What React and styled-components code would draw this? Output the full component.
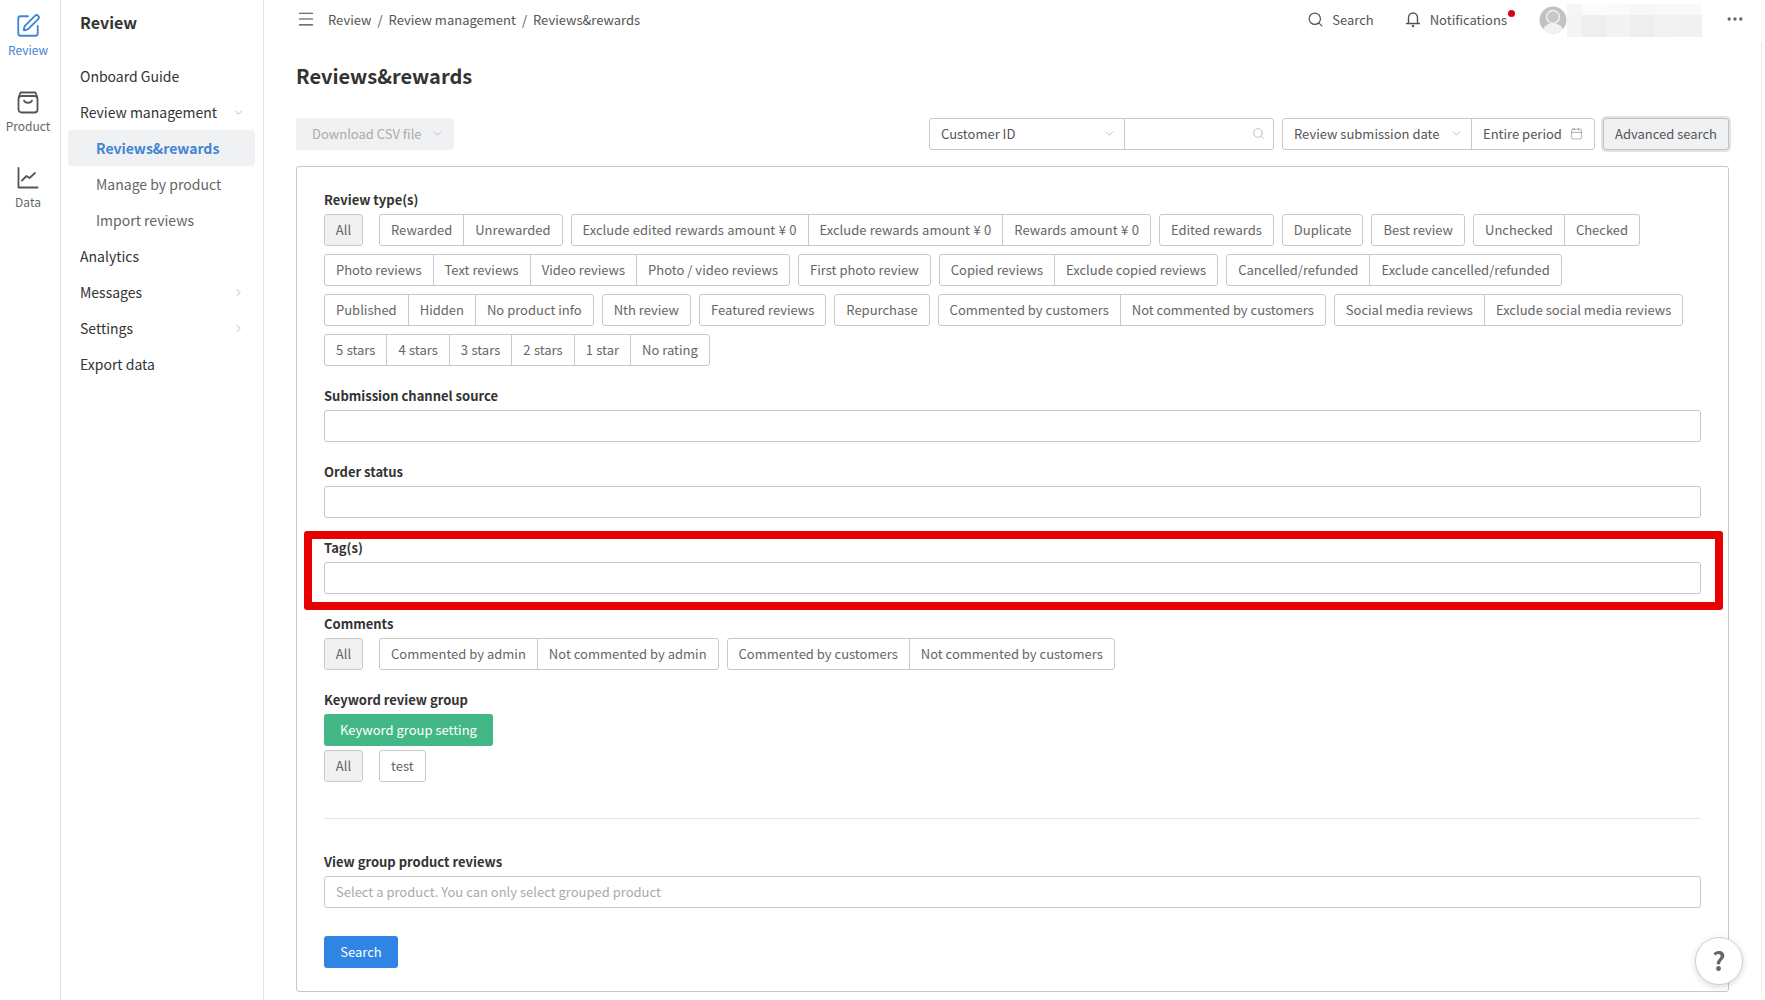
import styled, { createGlobalStyle } from "styled-components"
import { Calendar, ChevronDown, ChevronRight, Ellipsis, Menu, Search, SquarePen } from "lucide-react"

const typeGroups = [
  ["Rewarded", "Unrewarded"],
  ["Exclude edited rewards amount ¥ 0", "Exclude rewards amount ¥ 0", "Rewards amount ¥ 0"],
  ["Edited rewards"],
  ["Duplicate"],
  ["Best review"],
  ["Unchecked", "Checked"],
  ["Photo reviews", "Text reviews", "Video reviews", "Photo / video reviews"],
  ["First photo review"],
  ["Copied reviews", "Exclude copied reviews"],
  ["Cancelled/refunded", "Exclude cancelled/refunded"],
  ["Published", "Hidden", "No product info"],
  ["Nth review"],
  ["Featured reviews"],
  ["Repurchase"],
  ["Commented by customers", "Not commented by customers"],
  ["Social media reviews", "Exclude social media reviews"],
  ["5 stars", "4 stars", "3 stars", "2 stars", "1 star", "No rating"],
]

const commentGroups = [
  ["Commented by admin", "Not commented by admin"],
  ["Commented by customers", "Not commented by customers"],
]

// pale mosaic that hides the user name
const mosaicShades = [
  "#f6f6f6", "#fbfbfb", "#fafafa", "#f7f7f7", "#f8f8f8", "#f9f9f9",
  "#f4f4f4", "#eeeeee", "#f3f3f3", "#eeeeee", "#f2f2f2", "#f1f1f1",
]

const ChipGroups = ({ groups }) => (
  <ChipWrap>
    <AllChip>All</AllChip>
    {groups.map((group) => (
      <ChipGroup key={group[0]}>
        {group.map((label) => (
          <Chip key={label} $spaced={/\d/.test(label)}>{label}</Chip>
        ))}
      </ChipGroup>
    ))}
  </ChipWrap>
)

const BagIcon = () => (
  <svg width="26" height="26" viewBox="0 0 26 26" fill="none" stroke="#555" strokeWidth="1.8" strokeLinecap="round" strokeLinejoin="round">
    <rect x="3.5" y="7" width="19" height="16.5" rx="3" />
    <path d="M3.8 8 L5.5 3.5 H20.5 L22.2 8" />
    <path d="M9 11.5 C10 14.5 16 14.5 17 11.5" />
  </svg>
)

const ChartIcon = () => (
  <svg width="26" height="26" viewBox="0 0 26 26" fill="none" stroke="#555" strokeWidth="1.8" strokeLinecap="round" strokeLinejoin="round">
    <path d="M3.5 3 V22.5 H22.5" />
    <path d="M7 15.5 L11.5 11 L14.5 13 L20 8" />
  </svg>
)

const BellIcon = () => (
  <svg width="18" height="18" viewBox="0 0 18 18" fill="none" stroke="#555" strokeWidth="1.4" strokeLinecap="round">
    <path d="M2.5 13.5 H15.5" />
    <path d="M4.5 13.5 V7.5 a4.5 4.5 0 0 1 9 0 V13.5" />
    <circle cx="9" cy="16" r="0.6" fill="#555" />
  </svg>
)

const AvatarIcon = () => (
  <svg width="28" height="28" viewBox="0 0 28 28">
    <circle cx="14" cy="14" r="13.5" fill="#c2c2c2" />
    <path d="M4 23.5 C6 18.5 10 17.5 14 17.5 C18 17.5 22 18.5 24 23.5 C19 28.5 9 28.5 4 23.5 Z" fill="#f2f2f2" />
    <circle cx="14" cy="11" r="6.5" fill="#c8c8c8" stroke="#f2f2f2" strokeWidth="1.4" />
  </svg>
)

const App = () => {
  return (
    <Page>
      <GlobalStyle />
      <Rail>
        <RailItem $active>
          <SquarePen size={26} strokeWidth={1.7} />
          <span>Review</span>
        </RailItem>
        <RailItem>
          <BagIcon />
          <span>Product</span>
        </RailItem>
        <RailItem>
          <ChartIcon />
          <span>Data</span>
        </RailItem>
      </Rail>

      <Sidebar>
        <SideTitle>Review</SideTitle>
        <SideItem>Onboard Guide</SideItem>
        <SideItem>
          Review management
          <ChevronDown size={13} strokeWidth={1.2} color="#999" />
        </SideItem>
        <SideSub $active>Reviews&amp;rewards</SideSub>
        <SideSub>Manage by product</SideSub>
        <SideSub>Import reviews</SideSub>
        <SideItem>Analytics</SideItem>
        <SideItem>
          Messages
          <ChevronRight size={13} strokeWidth={1.2} color="#999" />
        </SideItem>
        <SideItem>
          Settings
          <ChevronRight size={13} strokeWidth={1.2} color="#999" />
        </SideItem>
        <SideItem>Export data</SideItem>
      </Sidebar>

      <Main>
        <TopBar>
          <Menu size={20} strokeWidth={1.3} color="#444" />
          <Crumbs>
            <span>Review</span>
            <i>/</i>
            <span>Review management</span>
            <i>/</i>
            <span>Reviews&amp;rewards</span>
          </Crumbs>
          <TopRight>
            <TopAction $gap={30}>
              <Search size={17} strokeWidth={1.7} />
              Search
            </TopAction>
            <TopAction $gap={32}>
              <BellIcon />
              Notifications
              <RedDot />
            </TopAction>
            <UserBox>
              <AvatarIcon />
              <Mosaic>
                {mosaicShades.map((shade, i) => (
                  <MosaicCell key={i} $shade={shade} />
                ))}
              </Mosaic>
            </UserBox>
            <Ellipsis size={20} strokeWidth={2} color="#666" />
          </TopRight>
        </TopBar>

        <Content>
          <PageTitle>Reviews&amp;rewards</PageTitle>
          <Toolbar>
            <DisabledButton>
              Download CSV file
              <ChevronDown size={13} strokeWidth={1.3} />
            </DisabledButton>
            <ToolRight>
              <ControlGroup>
                <SelectCell $width={194}>
                  Customer ID
                  <ChevronDown size={13} strokeWidth={1.2} color="#999" />
                </SelectCell>
                <SelectCell $width={149}>
                  <span />
                  <Search size={13} strokeWidth={1.3} color="#aaa" />
                </SelectCell>
              </ControlGroup>
              <ControlGroup>
                <SelectCell $width={188}>
                  Review submission date
                  <ChevronDown size={13} strokeWidth={1.2} color="#999" />
                </SelectCell>
                <SelectCell $width={123}>
                  Entire period
                  <CalendarIcon size={13} strokeWidth={1.2} color="#888" />
                </SelectCell>
              </ControlGroup>
              <AdvancedButton>Advanced search</AdvancedButton>
            </ToolRight>
          </Toolbar>

          <Card>
            <Field>
              <FieldLabel>Review type(s)</FieldLabel>
              <ChipGroups groups={typeGroups} />
            </Field>
            <Field>
              <FieldLabel>Submission channel source</FieldLabel>
              <TextBox />
            </Field>
            <Field>
              <FieldLabel>Order status</FieldLabel>
              <TextBox />
            </Field>
            <Field>
              <Highlight />
              <FieldLabel>Tag(s)</FieldLabel>
              <TextBox />
            </Field>
            <Field>
              <FieldLabel>Comments</FieldLabel>
              <ChipGroups groups={commentGroups} />
            </Field>
            <KeywordField>
              <FieldLabel>Keyword review group</FieldLabel>
              <GreenButton>Keyword group setting</GreenButton>
              <ChipGroups groups={[["test"]]} />
            </KeywordField>
            <Divider />
            <Field>
              <FieldLabel>View group product reviews</FieldLabel>
              <TextBox>Select a product. You can only select grouped product</TextBox>
            </Field>
            <SearchButton>Search</SearchButton>
          </Card>
        </Content>
      </Main>

      <HelpButton>?</HelpButton>
    </Page>
  )
}

const GlobalStyle = createGlobalStyle`
    * {
        box-sizing: border-box;
    }

    body {
        margin: 0;
        background: #fff;
        color: #333;
        font-family: "Noto Sans CJK JP", "Noto Sans", sans-serif;
        font-size: 13px;
    }
`

const Page = styled.div`
    display: flex;
    height: 100vh;
    overflow: hidden;
`

const Rail = styled.nav`
    flex: none;
    width: 61px;
    padding: 13px 4px 0 0;
    border-right: 1px solid #e2e2e2;
`

const RailItem = styled.div`
    display: flex;
    flex-direction: column;
    align-items: center;
    gap: 3px;
    height: 76px;
    font-size: 12px;
    line-height: 16px;
    color: ${(props) => (props.$active ? "#3f85d3" : "#666")};
`

const Sidebar = styled.aside`
    flex: none;
    width: 203px;
    padding: 0 8px 0 7px;
    border-right: 1px solid #e2e2e2;
    font-size: 14px;
`

const SideTitle = styled.div`
    height: 58px;
    padding: 10px 0 0 12px;
    font-size: 16px;
    line-height: 24px;
    font-weight: 700;
`

const SideItem = styled.div`
    display: flex;
    align-items: center;
    justify-content: space-between;
    height: 36px;
    padding: 0 10px 0 12px;
    color: #333;
`

const SideSub = styled.div`
    display: flex;
    align-items: center;
    height: 36px;
    padding-left: 28px;
    border-radius: 4px;
    color: ${(props) => (props.$active ? "#3f85d3" : "#666")};
    background: ${(props) => (props.$active ? "#f0f1f3" : "transparent")};
    font-weight: ${(props) => (props.$active ? 700 : 400)};
`

const Main = styled.main`
    flex: 1;
    min-width: 0;
`

const TopBar = styled.header`
    display: flex;
    align-items: center;
    height: 38px;
    padding: 0 20px 0 32px;
`

const Crumbs = styled.div`
    display: flex;
    gap: 6px;
    margin-left: 12px;
    color: #555;

    i {
        font-style: normal;
    }
`

const TopRight = styled.div`
    display: flex;
    align-items: center;
    margin-left: auto;
`

const TopAction = styled.div`
    position: relative;
    display: flex;
    align-items: center;
    gap: 8px;
    margin-right: ${(props) => props.$gap}px;
    color: #555;
`

const RedDot = styled.span`
    position: absolute;
    top: 0;
    right: -8px;
    width: 7px;
    height: 7px;
    border-radius: 50%;
    background: #d9001b;
`

const UserBox = styled.div`
    display: flex;
    align-items: center;
    padding-top: 2px;
    margin-right: 23px;
`

const Mosaic = styled.div`
    display: grid;
    grid-template-columns: 15px repeat(5, 24px);
    grid-template-rows: 11px 22px;
    width: 135px;
    height: 33px;
`

const MosaicCell = styled.div`
    background: ${(props) => props.$shade};
`

const Content = styled.div`
    margin: 4px 3px 0 0;
    padding: 14px 32px 0 32px;
    border-right: 1px solid #e8e8e8;
`

const PageTitle = styled.h1`
    margin: 0 0 20px;
    font-size: 20px;
    line-height: 40px;
    height: 42px;
    font-weight: 700;
    color: #333;
`

const Toolbar = styled.div`
    display: flex;
    justify-content: space-between;
    margin-bottom: 16px;
`

const DisabledButton = styled.div`
    display: flex;
    align-items: center;
    gap: 9px;
    height: 32px;
    padding: 0 10px 2px 16px;
    border-radius: 3px;
    background: #f0f1f3;
    color: #aaa;
`

const ToolRight = styled.div`
    display: flex;
    gap: 8px;
`

const ControlGroup = styled.div`
    display: flex;
    height: 32px;
    border: 1px solid #c8c8c8;
    border-radius: 3px;
`

const SelectCell = styled.div`
    display: flex;
    align-items: center;
    justify-content: space-between;
    width: ${(props) => props.$width}px;
    padding: 0 8px 2px 11px;
    color: #555;
    white-space: nowrap;

    & + & {
        border-left: 1px solid #c8c8c8;
    }
`

const CalendarIcon = styled(Calendar)`
    margin-right: 3px;
`

const AdvancedButton = styled.div`
    display: flex;
    align-items: center;
    justify-content: center;
    width: 126px;
    height: 32px;
    padding-bottom: 2px;
    border: 1px solid #c0c0c0;
    border-radius: 3px;
    background: #f0f1f3;
    box-shadow: 0 0 0 2px #e4e4e4;
    color: #555;
`

const Card = styled.section`
    padding: 23px 27px;
    height: 826px;
    border: 1px solid #c8c8c8;
    border-radius: 3px;
`

const Field = styled.div`
    position: relative;
    margin-bottom: 20px;
`

const KeywordField = styled.div`
    display: flex;
    flex-direction: column;
    align-items: flex-start;
`

const FieldLabel = styled.div`
    height: 20px;
    margin-bottom: 4px;
    line-height: 20px;
    font-weight: 700;
    color: #333;
`

const ChipWrap = styled.div`
    display: flex;
    flex-wrap: wrap;
    gap: 8px;
`

const ChipGroup = styled.div`
    display: flex;
    height: 32px;
    border: 1px solid #c8c8c8;
    border-radius: 3px;
`

const Chip = styled.div`
    display: flex;
    align-items: center;
    padding: 0 11px 2px;
    color: #666;
    white-space: pre;
    word-spacing: ${(props) => (props.$spaced ? "0.5px" : "normal")};

    & + & {
        border-left: 1px solid #c8c8c8;
    }
`

const AllChip = styled.div`
    display: flex;
    align-items: center;
    justify-content: center;
    width: 39px;
    height: 32px;
    margin-right: 8px;
    padding-bottom: 2px;
    border: 1px solid #c8c8c8;
    border-radius: 3px;
    background: #f0f1f3;
    color: #666;
`

const TextBox = styled.div`
    display: flex;
    align-items: center;
    height: 32px;
    padding: 0 11px 2px;
    border: 1px solid #c8c8c8;
    border-radius: 3px;
    color: #aaa;
`

const Highlight = styled.div`
    position: absolute;
    top: -7px;
    right: -22px;
    bottom: -16px;
    left: -20px;
    border: 8px solid #e60000;
    border-radius: 3px;
`

const GreenButton = styled.div`
    display: flex;
    align-items: center;
    height: 32px;
    margin-bottom: 4px;
    padding: 0 16px 2px;
    border-radius: 3px;
    background: #43b886;
    color: #fff;
`

const Divider = styled.hr`
    height: 1px;
    margin: 36px 0 33px;
    border: none;
    background: #e6e6e6;
`

const SearchButton = styled.div`
    display: flex;
    align-items: center;
    justify-content: center;
    width: 74px;
    height: 32px;
    margin-top: 28px;
    padding-bottom: 2px;
    border-radius: 3px;
    background: #2f84e4;
    color: #fff;
`

const HelpButton = styled.div`
    position: fixed;
    right: 22px;
    bottom: 15px;
    display: flex;
    align-items: center;
    justify-content: center;
    width: 48px;
    height: 48px;
    padding-bottom: 3px;
    border: 1px solid #d0d0d0;
    border-radius: 50%;
    background: #fff;
    box-shadow: 0 2px 6px rgba(0, 0, 0, 0.15);
    color: #666;
    font-size: 26px;
    font-weight: 700;
`

export default App
